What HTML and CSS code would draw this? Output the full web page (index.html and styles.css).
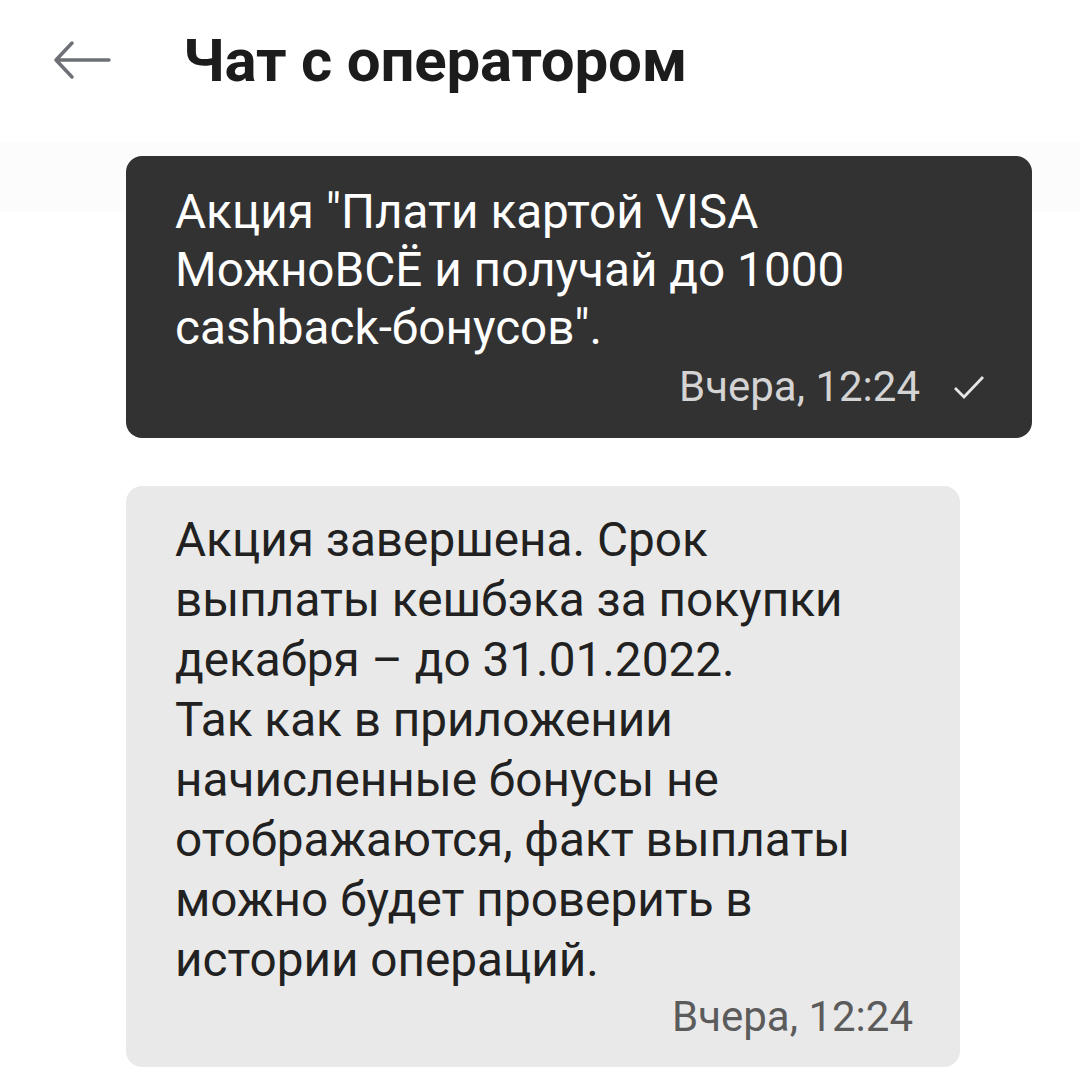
FILE: index.html
```html
<!DOCTYPE html>
<html lang="ru">
<head>
    <meta charset="UTF-8">
    <meta name="viewport" content="width=device-width, initial-scale=1.0">
    <title>Чат с оператором</title>
    <link rel="stylesheet" href="styles.css">
</head>

<body>
    <header class="topbar">
        <a class="back" href="#" aria-label="Назад">
            <svg width="60" height="40" viewBox="0 0 60 40">
                <path d="M57 20H4M20 3L4 20l16 17" fill="none" stroke="#6d7175" stroke-width="3.5" stroke-linecap="round" stroke-linejoin="round"/>
            </svg>
        </a>
        <h1>Чат с оператором</h1>
    </header>

    <main class="chat">
        <div class="band"></div>

        <section class="msg out">
            <p>Акция "Плати картой VISA МожноВСЁ и получай до 1000 cashback-бонусов".</p>
            <div class="meta">
                <span>Вчера, 12:24</span>
                <svg width="32" height="26" viewBox="0 0 32 26">
                    <path d="M2 14l9 9L30 3" fill="none" stroke="#e6e6e6" stroke-width="2.8"/>
                </svg>
            </div>
        </section>

        <section class="msg in">
            <p>Акция завершена. Срок выплаты кешбэка за покупки декабря – до 31.01.2022.<br>Так как в приложении начисленные бонусы не отображаются, факт выплаты можно будет проверить в истории операций.</p>
            <div class="meta">
                <span>Вчера, 12:24</span>
            </div>
        </section>
    </main>
</body>
</html>
```

FILE: styles.css
```css
body {
    margin: 0;
    padding: 0;
    background: #fff;
    font-family: Roboto, 'Liberation Sans', sans-serif;
    color: #212121;
}

.topbar {
    display: flex;
    align-items: center;
    height: 120px;
    padding-left: 52px;
}

.back {
    display: flex;
    width: 60px;
    height: 40px;
    margin-right: 71px;
}

.topbar h1 {
    margin: 0;
    font-size: 60px;
    font-weight: 700;
    color: #1c1c1c;
    letter-spacing: -0.2px;
}

.chat {
    position: relative;
    padding: 36px 48px 20px 126px;
}

.band {
    position: absolute;
    left: 0;
    right: 0;
    top: 22px;
    height: 70px;
    background: #fcfcfc;
}

.msg {
    position: relative;
    border-radius: 16px;
    padding: 27px 47px 27px 49px;
    margin-bottom: 48px;
}

.msg p {
    margin: 0;
    font-size: 47.7px;
    line-height: 58px;
}

.msg .meta {
    display: flex;
    justify-content: flex-end;
    align-items: center;
    gap: 33px;
    margin-top: 6px;
    font-size: 42px;
    line-height: 48px;
}

.out {
    background: #323232;
    color: #fff;
}

.out p {
    margin-right: 30px;
}

.out .meta {
    color: #d4d4d4;
}

.in {
    background: #e9e9e9;
    margin-right: 72px;
    padding-top: 24px;
    padding-bottom: 26px;
}

.in p {
    line-height: 60px;
    margin-right: 14px;
}

.in .meta {
    margin-top: 3px;
    color: #5b5b5b;
}
```
